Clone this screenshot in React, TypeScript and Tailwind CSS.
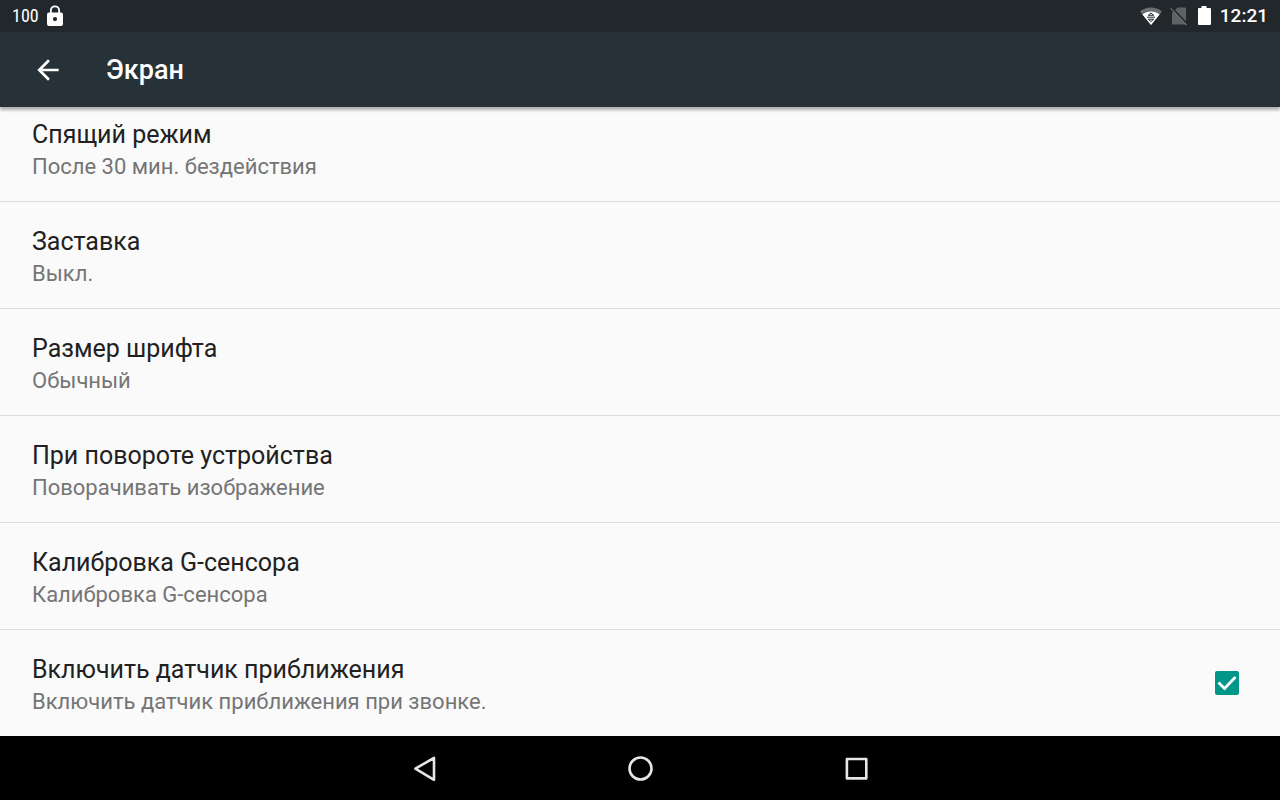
const settings = [
  { title: "Заставка", summary: "Выкл." },
  { title: "Размер шрифта", summary: "Обычный" },
  { title: "При повороте устройства", summary: "Поворачивать изображение" },
  { title: "Калибровка G-сенсора", summary: "Калибровка G-сенсора" },
];

const SettingText = ({ title, summary }: { title: string; summary: string }) => (
  <span className="flex flex-col">
    <span className="text-[25px] leading-8 text-[#212121]">{title}</span>
    <span className="text-[22px] leading-8 text-[#757575]">{summary}</span>
  </span>
);

const StatusBar = () => {
  return (
    <div className="w-full h-8 px-3 bg-[#21272b] text-white flex items-center justify-between">
      <div className="flex items-center gap-2">
        <span className="font-['Liberation_Sans_Narrow','Roboto_Condensed',Roboto,sans-serif] text-lg leading-8">
          100
        </span>
        <svg width="16" height="22" viewBox="0 0 16 22" aria-hidden="true">
          <path
            d="M3.9 9V5.4a4.1 4.1 0 0 1 8.2 0V9"
            fill="none"
            stroke="#fff"
            strokeWidth="1.8"
          />
          <path
            fillRule="evenodd"
            fill="#fff"
            d="M2 7.6h12a2 2 0 0 1 2 2V19a2 2 0 0 1-2 2H2a2 2 0 0 1-2-2V9.6a2 2 0 0 1 2-2zM8 12a2.1 2.1 0 1 0 0 4.2A2.1 2.1 0 0 0 8 12z"
          />
        </svg>
      </div>
      <div className="flex items-center gap-[7px]">
        <svg width="24" height="20" viewBox="0 0 24 20" aria-hidden="true">
          <path fill="#6b6f72" d="M1 5.5C7 .2 17 .2 23 5.5L12 19z" />
          <path fill="#fff" d="M3.4 8.6C8 4.6 16 4.6 20.6 8.6L12 19z" />
          <path
            fill="none"
            stroke="#21272b"
            strokeWidth="1"
            d="M9.3 9.3L12 7l2.7 2.3zM9.3 13.2l2.7 2.3 2.7-2.3zM8 11.2h8"
          />
        </svg>
        <svg width="18" height="20" viewBox="0 0 18 20" aria-hidden="true">
          <path fill="#5d6265" d="M7.5 1.5H15a1 1 0 0 1 1 1v15a1 1 0 0 1-1 1H3a1 1 0 0 1-1-1V7z" />
          <path stroke="#21272b" strokeWidth="2" d="M1.4 1.4L17.4 18.4" />
          <path stroke="#6b6f72" strokeWidth="1.2" d="M.6 2.2L16.6 19.2" />
        </svg>
        <svg width="18" height="20" viewBox="0 0 18 20" aria-hidden="true">
          <path
            fill="#fff"
            d="M6.5 0h5v2H15a1 1 0 0 1 1 1v15a1 1 0 0 1-1 1H4a1 1 0 0 1-1-1V3a1 1 0 0 1 1-1h2.5z"
          />
        </svg>
        <span className="text-[19px] leading-8 font-medium">12:21</span>
      </div>
    </div>
  );
};

const AppBar = () => {
  return (
    <header className="w-full h-[75px] px-8 bg-[#263238] text-white flex items-center gap-[42px] shadow-[0_3px_3px_rgba(0,0,0,0.3)]">
      <button type="button" aria-label="Назад" className="w-8 h-8 flex items-center justify-center">
        <svg width="32" height="32" viewBox="0 0 24 24" aria-hidden="true">
          <path
            fill="#fff"
            d="M20 11H7.83l5.59-5.59L12 4l-8 8 8 8 1.41-1.41L7.83 13H20v-2z"
          />
        </svg>
      </button>
      <h1 className="text-[27px] leading-8 font-medium">Экран</h1>
    </header>
  );
};

const NavBar = () => {
  return (
    <nav className="w-full h-16 bg-black flex justify-center">
      <button type="button" aria-label="Назад" className="w-[216px] flex items-center justify-center">
        <svg width="32" height="32" viewBox="0 0 32 32" fill="none" stroke="#e6e6e6" strokeWidth="2.6" strokeLinejoin="round">
          <path d="M26 5.8v22L7.4 16.7z" />
        </svg>
      </button>
      <button type="button" aria-label="Главный экран" className="w-[216px] flex items-center justify-center">
        <svg width="32" height="32" viewBox="0 0 32 32" fill="none" stroke="#e6e6e6" strokeWidth="2.6">
          <circle cx="16.5" cy="16.5" r="11" />
        </svg>
      </button>
      <button type="button" aria-label="Обзор" className="w-[216px] flex items-center justify-center">
        <svg width="32" height="32" viewBox="0 0 32 32" fill="none" stroke="#e6e6e6" strokeWidth="2.6" strokeLinejoin="round">
          <rect x="6.9" y="7" width="19.4" height="19.4" />
        </svg>
      </button>
    </nav>
  );
};

const App = () => {
  return (
    <div className="w-full min-h-screen flex flex-col bg-[#fafafa] font-[Roboto,sans-serif]">
      <StatusBar />
      <AppBar />
      <main className="flex-1 flex flex-col divide-y divide-[#dcdcdc]">
        <button type="button" className="w-full px-8 pt-3 pb-[18px] text-left">
          <SettingText title="Спящий режим" summary="После 30 мин. бездействия" />
        </button>
        {settings.map((item) => (
          <button key={item.title} type="button" className="w-full px-8 pt-6 pb-[18px] text-left">
            <SettingText title={item.title} summary={item.summary} />
          </button>
        ))}
        <label className="w-full pl-8 pr-[41px] flex items-center justify-between">
          <span className="pt-6 pb-[18px]">
            <SettingText
              title="Включить датчик приближения"
              summary="Включить датчик приближения при звонке."
            />
          </span>
          <span className="grid w-6 h-6 shrink-0">
            <input
              type="checkbox"
              defaultChecked
              className="peer col-start-1 row-start-1 appearance-none w-full h-full rounded-xs border-2 border-[#757575] checked:border-[#009688] checked:bg-[#009688]"
            />
            <svg
              viewBox="0 0 24 24"
              className="col-start-1 row-start-1 w-full h-full pointer-events-none invisible peer-checked:visible"
              aria-hidden="true"
            >
              <path d="M3.5 11.5l6 6L20.500 6" fill="none" stroke="#fff" strokeWidth="2.8" />
            </svg>
          </span>
        </label>
      </main>
      <NavBar />
    </div>
  );
};

export default App;
